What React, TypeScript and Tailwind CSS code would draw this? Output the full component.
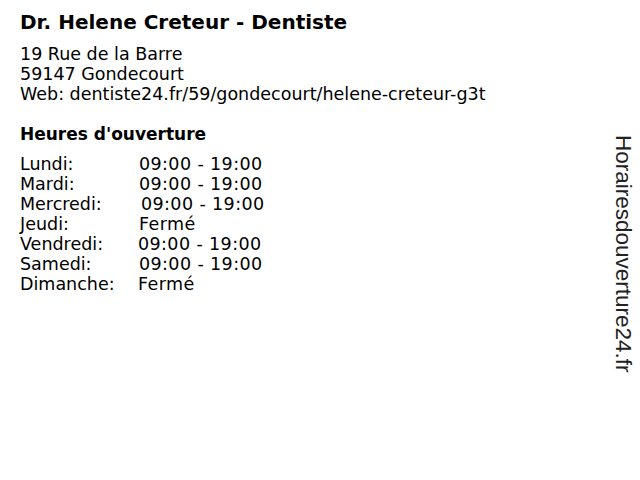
const hours = [
  { day: "Lundi:", time: "09:00 - 19:00", shift: "" },
  { day: "Mardi:", time: "09:00 - 19:00", shift: "" },
  { day: "Mercredi:", time: "09:00 - 19:00", shift: "pl-[2px]" },
  { day: "Jeudi:", time: "Fermé", shift: "" },
  { day: "Vendredi:", time: "09:00 - 19:00", shift: "-ml-px" },
  { day: "Samedi:", time: "09:00 - 19:00", shift: "" },
  { day: "Dimanche:", time: "Fermé", shift: "-ml-px" },
];

export default function App() {
  return (
    <div className="relative w-[640px] h-[480px] bg-white text-black font-['DejaVu_Sans',sans-serif] overflow-hidden">
      <div className="px-5 pt-[9px]">
        <h1 className="text-[20px] leading-[26px] font-bold">Dr. Helene Creteur - Dentiste</h1>
        <div className="mt-[9px] text-[17.5px] leading-[20px]">
          <p>19 Rue de la Barre</p>
          <p>59147 Gondecourt</p>
          <p>Web: dentiste24.fr/59/gondecourt/helene-creteur-g3t</p>
        </div>
        <h2 className="mt-[20px] text-[17px] leading-[20px] font-bold">Heures d'ouverture</h2>
        <div className="mt-[10px] text-[17.5px] leading-[20px]">
          {hours.map((h) => (
            <div key={h.day} className="flex">
              <span className="w-[119px]">{h.day}</span>
              <span className={`tracking-[0.4px] ${h.shift}`}>{h.time}</span>
            </div>
          ))}
        </div>
      </div>
      {/* logo vertical à droite */}
      <div className="absolute left-[635px] top-[135px] origin-top-left rotate-90 whitespace-nowrap font-['Liberation_Sans',sans-serif] text-[22.5px] leading-[24px] text-[#222]">
        Horairesdouverture24.fr
      </div>
    </div>
  );
}
